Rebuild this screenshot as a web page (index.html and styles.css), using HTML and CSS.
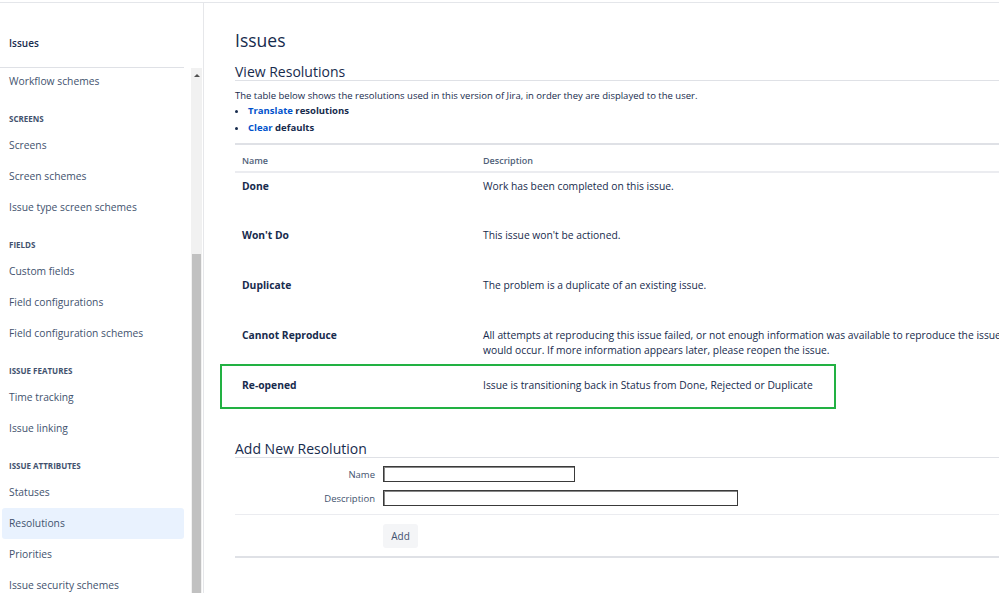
FILE: index.html
```html
<!DOCTYPE html>
<html lang="en">
<head>
  <meta charset="UTF-8" />
  <title>View Resolutions - Jira</title>
  <link rel="stylesheet" href="styles.css">
</head>
<body>

<div class="topbar"></div>

<div class="layout">

  <!-- SIDEBAR -->
  <aside class="sidebar">
    <div class="side-head">Issues</div>
    <div class="side-body">
      <nav class="side-nav">
        <a class="nav-item">Workflow schemes</a>

        <div class="nav-heading">Screens</div>
        <a class="nav-item">Screens</a>
        <a class="nav-item">Screen schemes</a>
        <a class="nav-item">Issue type screen schemes</a>

        <div class="nav-heading">Fields</div>
        <a class="nav-item">Custom fields</a>
        <a class="nav-item">Field configurations</a>
        <a class="nav-item">Field configuration schemes</a>

        <div class="nav-heading">Issue features</div>
        <a class="nav-item">Time tracking</a>
        <a class="nav-item">Issue linking</a>

        <div class="nav-heading">Issue attributes</div>
        <a class="nav-item">Statuses</a>
        <a class="nav-item active">Resolutions</a>
        <a class="nav-item">Priorities</a>
        <a class="nav-item">Issue security schemes</a>
      </nav>
      <div class="scrollbar">
        <span class="scroll-up"></span>
        <span class="scroll-thumb"></span>
      </div>
    </div>
  </aside>

  <!-- MAIN -->
  <main class="content">
    <h1>Issues</h1>

    <h2>View Resolutions</h2>
    <p class="intro">The table below shows the resolutions used in this version of Jira, in order they are displayed to the user.</p>
    <ul class="actions">
      <li><a href="#">Translate</a> resolutions</li>
      <li><a href="#">Clear</a> defaults</li>
    </ul>

    <table class="res-table">
      <colgroup>
        <col class="col-name">
        <col>
      </colgroup>
      <thead>
        <tr><th>Name</th><th>Description</th></tr>
      </thead>
      <tbody>
        <tr><td class="res-name">Done</td><td>Work has been completed on this issue.</td></tr>
        <tr><td class="res-name">Won't Do</td><td>This issue won't be actioned.</td></tr>
        <tr><td class="res-name">Duplicate</td><td>The problem is a duplicate of an existing issue.</td></tr>
        <tr>
          <td class="res-name">Cannot Reproduce</td>
          <td>All attempts at reproducing this issue failed, or not enough information was available to reproduce the issue. Reading the code produces no insight as to why this behavior<br>would occur. If more information appears later, please reopen the issue.</td>
        </tr>
        <tr>
          <td class="res-name marked">Re-opened<span class="mark-box"></span></td>
          <td>Issue is transitioning back in Status from Done, Rejected or Duplicate</td>
        </tr>
      </tbody>
    </table>

    <h2 class="add-title">Add New Resolution</h2>
    <form class="add-form" onsubmit="return false">
      <div class="fields">
        <label for="resName">Name</label>
        <input type="text" id="resName" class="in-name" />
        <label for="resDesc">Description</label>
        <input type="text" id="resDesc" class="in-desc" />
      </div>
      <div class="form-buttons">
        <button type="submit">Add</button>
      </div>
    </form>
  </main>

</div>

</body>
</html>
```

FILE: styles.css
```css
* {
  margin: 0;
  padding: 0;
  box-sizing: border-box;
}

body {
  font-family: 'Open Sans', 'Noto Sans', sans-serif;
  font-size: 9.5px;
  color: #172b4d;
  background: #fff;
  overflow: hidden;
}

.topbar {
  height: 3px;
  border-bottom: 1px solid #e4e6ea;
}

.layout {
  display: flex;
  height: calc(100vh - 3px);
  overflow: hidden;
}

/* Sidebar */
.sidebar {
  width: 204px;
  flex-shrink: 0;
  border-right: 1px solid #e6e7ea;
  display: flex;
  flex-direction: column;
}

.side-head {
  width: 184px;
  height: 65px;
  padding: 33px 0 0 9px;
  line-height: 14px;
  font-size: 10px;
  font-weight: 600;
  color: #172b4d;
  border-bottom: 1px solid #dfe1e6;
}

.side-body {
  flex: 1;
  display: flex;
  min-height: 0;
}

.side-nav {
  width: 184px;
  overflow: hidden;
  margin-top: -2px;
}

.nav-item {
  display: block;
  width: 182px;
  height: 31px;
  line-height: 31px;
  margin-left: 2px;
  padding-left: 7px;
  border-radius: 3px;
  font-size: 10.3px;
  color: #42526e;
}

.nav-item.active {
  background: #e9f2fe;
}

.nav-heading {
  height: 33px;
  padding: 16px 0 0 9px;
  line-height: 12px;
  font-size: 8px;
  font-weight: 700;
  text-transform: uppercase;
  color: #42526e;
}

.scrollbar {
  width: 11px;
  margin-left: 7px;
  background: #f1f1f1;
  display: flex;
  flex-direction: column;
}

.scroll-up {
  height: 14px;
  display: flex;
  justify-content: center;
  align-items: center;
}

.scroll-up::before {
  content: "";
  border-left: 3px solid transparent;
  border-right: 3px solid transparent;
  border-bottom: 3px solid #505050;
}

.scroll-thumb {
  flex: 1;
  margin: 172px 1px 0;
  background: #c1c1c1;
}

/* Main content */
.content {
  width: 1100px;
  flex-shrink: 0;
  padding-left: 31px;
}

h1 {
  margin-top: 25px;
  font-size: 17.5px;
  line-height: 24px;
  font-weight: 400;
  color: #172b4d;
}

h2 {
  margin-top: 11px;
  font-size: 14px;
  line-height: 17px;
  font-weight: 400;
  color: #172b4d;
  border-bottom: 1px solid #dfe1e6;
}

.intro {
  margin-top: 8px;
  line-height: 14px;
}

.actions {
  padding-left: 13px;
}

.actions li {
  line-height: 17px;
  font-weight: 700;
}

.actions li:first-child {
  margin-top: -1px;
}

.actions a {
  color: #0052cc;
  text-decoration: none;
}

/* Resolutions table */
.res-table {
  width: 1000px;
  margin-top: 7px;
  border-collapse: collapse;
  table-layout: fixed;
  border-top: 2px solid #dfe1e6;
  font-size: 10.3px;
}

.col-name {
  width: 241px;
}

.res-table th {
  text-align: left;
  padding: 9px 7px 3px;
  line-height: 14px;
  font-size: 9px;
  font-weight: 600;
  color: #505f79;
  border-bottom: 2px solid #ebecf0;
}

.res-table td {
  height: 50px;
  vertical-align: top;
  padding: 6px 7px 0;
  line-height: 15px;
  white-space: nowrap;
}

.res-name {
  font-weight: 700;
}

.marked {
  position: relative;
}

.mark-box {
  position: absolute;
  left: -15px;
  top: -8px;
  width: 616px;
  height: 45px;
  border: 2px solid #22b143;
}

/* Add form */
.add-title {
  margin-top: 18px;
}

.fields {
  display: grid;
  grid-template-columns: 140px auto;
  column-gap: 8px;
  row-gap: 8px;
  padding: 8px 0;
  border-bottom: 1px solid #ebecf0;
  justify-items: start;
}

.fields label {
  justify-self: end;
  align-self: center;
  color: #42526e;
  font-size: 9.5px;
}

.fields input {
  height: 16px;
  border: 1px solid #3a3a3a;
  box-shadow: inset 1px 1px 0 #888;
  font-family: inherit;
  font-size: 10px;
}

.in-name {
  width: 192px;
}

.in-desc {
  width: 355px;
}

.form-buttons {
  padding: 9px 0 8px 148px;
  border-bottom: 2px solid #dfe1e6;
}

.form-buttons button {
  width: 35px;
  height: 24px;
  border: none;
  border-radius: 3px;
  background: #f4f5f7;
  color: #42526e;
  font-family: inherit;
  font-size: 10px;
  cursor: pointer;
}
```
